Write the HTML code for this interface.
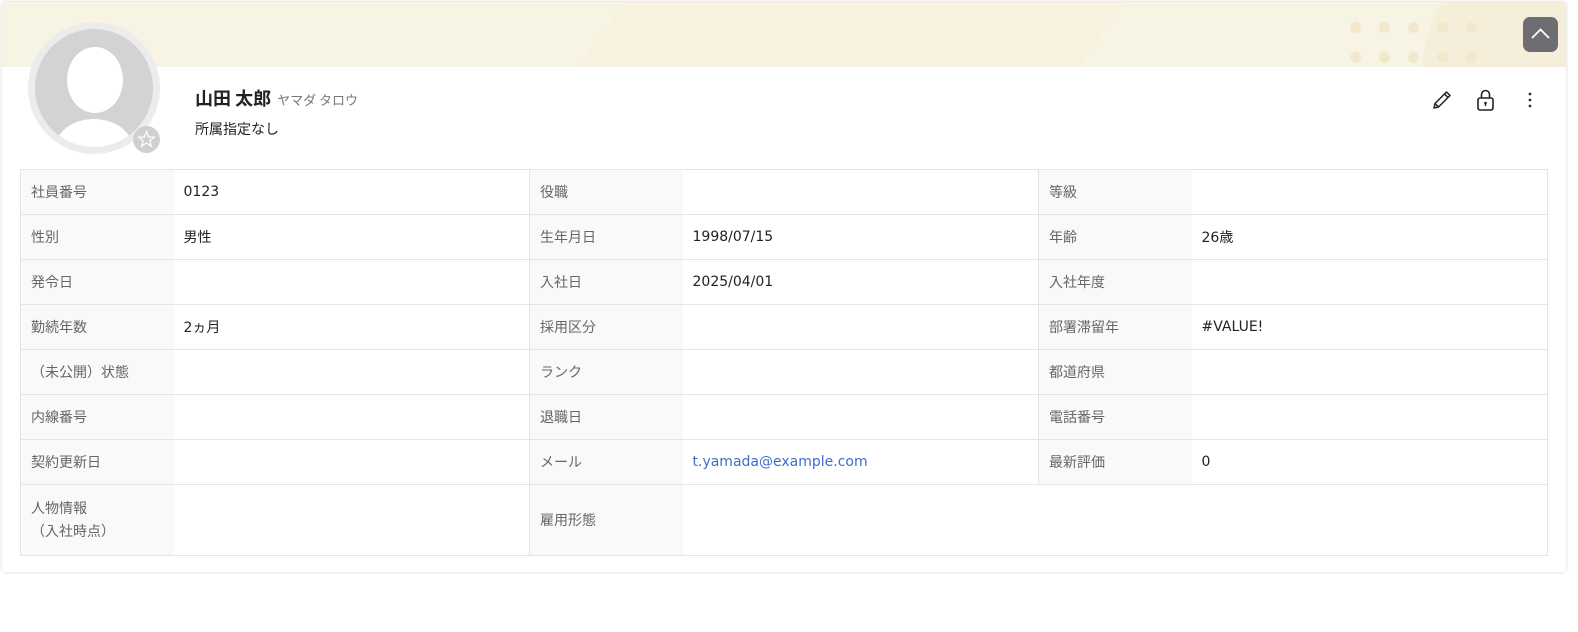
<!DOCTYPE html>
<html><head><meta charset="utf-8"><style>
*{box-sizing:border-box;margin:0;padding:0}
body{width:1578px;height:632px;background:#fff;font-family:"Noto Sans CJK JP","Liberation Sans",sans-serif;position:relative;overflow:hidden}
.card{position:absolute;left:2px;top:2px;width:1564px;height:570px;background:#fff;box-shadow:0 0 3px rgba(0,0,0,.2);border-radius:3px;overflow:hidden}
.banner{position:absolute;left:0;top:0;width:100%;height:65px;background:#f8f4e3;overflow:hidden}
.dot{position:absolute;width:11px;height:11px;border-radius:50%;background:#f3e8cc}
.btn{position:absolute;left:1521px;top:15px;width:35px;height:35px;border-radius:7px;background:#6e6e72}
.av{position:absolute;left:28px;top:22px;width:132px;height:132px;border-radius:50%;background:#ececec}
.av .in{position:absolute;left:7px;top:7px;width:118px;height:118px;border-radius:50%;background:#d3d3d3;overflow:hidden}
.star{position:absolute;left:133px;top:126px;width:27px;height:27px;border-radius:50%;background:#d0d0d2}
.name{position:absolute;left:195px;top:85px;font-size:18px;font-weight:bold;color:#222}
.kana{font-size:13px;font-weight:normal;color:#777;margin-left:6px}
.dept{position:absolute;left:195px;top:119px;font-size:14px;color:#222}
table{position:absolute;left:20px;top:169px;width:1528px;border-collapse:collapse;font-size:14px;font-family:"DejaVu Sans","Noto Sans CJK JP",sans-serif}
td{border:1px solid #e5e5e8;height:45px;padding:0 10px;vertical-align:middle}
td.l{background:#f9f9fb;color:#666;width:153px;border-right:none;font-family:"Noto Sans CJK JP",sans-serif}
td.v{width:356px;color:#222;border-left:none}
a{color:#3b6fcc;text-decoration:none}
</style></head><body>
<div class="card">
<div class="banner">
<div style="position:absolute;left:580px;top:-40px;width:500px;height:200px;background:#f6f0dc;transform:skewX(-35deg);opacity:.6"></div>
<div style="position:absolute;left:1420px;top:-60px;width:260px;height:260px;border-radius:50%;background:#f5eedb"></div>
<div class="dot" style="left:1348px;top:20px"></div><div class="dot" style="left:1377px;top:20px"></div><div class="dot" style="left:1406px;top:20px"></div><div class="dot" style="left:1435px;top:20px"></div><div class="dot" style="left:1464px;top:20px"></div>
<div class="dot" style="left:1348px;top:50px"></div><div class="dot" style="left:1377px;top:50px"></div><div class="dot" style="left:1406px;top:50px"></div><div class="dot" style="left:1435px;top:50px"></div><div class="dot" style="left:1464px;top:50px"></div>
<div class="btn"><svg width="35" height="35" viewBox="0 0 35 35"><path d="M9 21 L17.5 12.5 L26 21" fill="none" stroke="#fff" stroke-width="1.8"/></svg></div>
</div>
</div>
<div class="av"><div class="in">
<div style="position:absolute;left:32px;top:18px;width:56px;height:66px;border-radius:50%;background:#fff"></div>
<div style="position:absolute;left:20px;top:90px;width:78px;height:60px;border-radius:50%;background:#fff"></div>
</div></div>
<div class="star"><svg width="27" height="27" viewBox="0 0 27 27"><path d="M13.5 5.5 L15.6 11 L21.3 11.2 L16.8 14.7 L18.4 20.3 L13.5 17 L8.6 20.3 L10.2 14.7 L5.7 11.2 L11.4 11 Z" fill="none" stroke="#fff" stroke-width="1.2"/></svg></div>
<div class="name">山田 太郎<span class="kana">ヤマダ タロウ</span></div>
<div class="dept">所属指定なし</div>
<svg style="position:absolute;left:1430px;top:88px" width="24" height="24" viewBox="0 0 24 24"><path d="M4 20 L5 15.5 L16.5 4 L20 7.5 L8.5 19 Z M14.5 6 L18 9.5 M5 15.5 L8.5 19" fill="none" stroke="#222" stroke-width="1.5" stroke-linejoin="round"/></svg>
<svg style="position:absolute;left:1474px;top:88px" width="24" height="24" viewBox="0 0 24 24"><rect x="4" y="10" width="15" height="12" rx="2" fill="none" stroke="#222" stroke-width="1.6"/><path d="M7.5 10 V6.5 a4 4 0 0 1 8 0 V10" fill="none" stroke="#222" stroke-width="1.6"/><circle cx="11.5" cy="15" r="1.3" fill="#222"/><path d="M11.5 15 V18" stroke="#222" stroke-width="1.4"/></svg>
<svg style="position:absolute;left:1518px;top:88px" width="24" height="24" viewBox="0 0 24 24"><circle cx="12" cy="6" r="1.4" fill="#333"/><circle cx="12" cy="12" r="1.4" fill="#333"/><circle cx="12" cy="18" r="1.4" fill="#333"/></svg>
<table>
<tr><td class="l">社員番号</td><td class="v">0123</td><td class="l">役職</td><td class="v"></td><td class="l">等級</td><td class="v"></td></tr>
<tr><td class="l">性別</td><td class="v">男性</td><td class="l">生年月日</td><td class="v">1998/07/15</td><td class="l">年齢</td><td class="v">26歳</td></tr>
<tr><td class="l">発令日</td><td class="v"></td><td class="l">入社日</td><td class="v">2025/04/01</td><td class="l">入社年度</td><td class="v"></td></tr>
<tr><td class="l">勤続年数</td><td class="v">2ヵ月</td><td class="l">採用区分</td><td class="v"></td><td class="l">部署滞留年</td><td class="v">#VALUE!</td></tr>
<tr><td class="l">（未公開）状態</td><td class="v"></td><td class="l">ランク</td><td class="v"></td><td class="l">都道府県</td><td class="v"></td></tr>
<tr><td class="l">内線番号</td><td class="v"></td><td class="l">退職日</td><td class="v"></td><td class="l">電話番号</td><td class="v"></td></tr>
<tr><td class="l">契約更新日</td><td class="v"></td><td class="l">メール</td><td class="v"><a>t.yamada@example.com</a></td><td class="l">最新評価</td><td class="v">0</td></tr>
<tr><td class="l" style="height:71px;line-height:23px">人物情報<br>（入社時点）</td><td class="v"></td><td class="l">雇用形態</td><td class="v" colspan="3"></td></tr>
</table>
</body></html>
